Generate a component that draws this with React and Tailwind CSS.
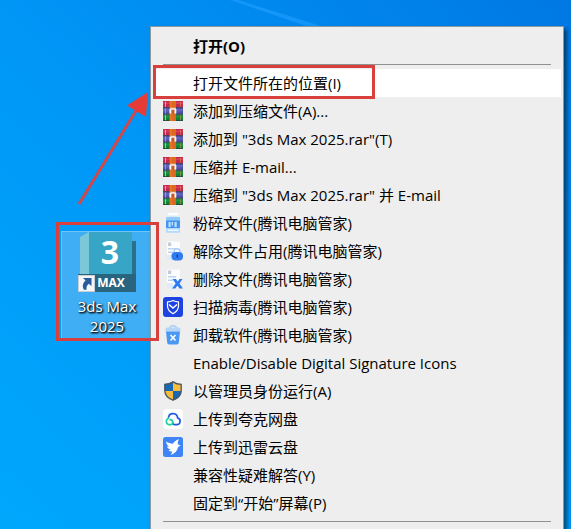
function RarIcon() {
  return (
    <svg viewBox="0 0 20 20" className="size-5" aria-hidden="true">
      <rect x="0" y="0" width="20" height="6.5" fill="#c0284c" />
      <rect x="0" y="1.2" width="20" height="2" fill="#d93a60" />
      <rect x="0" y="6.500" width="20" height="7" fill="#4c50a4" />
      <rect x="0" y="8" width="20" height="2.500" fill="#5e62b8" />
      <rect x="0" y="13.500" width="20" height="6.500" fill="#128038" />
      <rect x="0" y="14.600" width="20" height="2" fill="#1f9346" />
      <path d="M0 6.500h20M0 13.300h20M0 19.700h20" stroke="#2b2038" strokeWidth="0.600" />
      <path d="M2.500 0.800v5M2.500 14.200v5" stroke="#e8b83a" strokeWidth="1" />
      <path d="M17.500 0.800v5M17.500 14.200v5" stroke="#e0a040" strokeWidth="0.500" />
      <path d="M2.500 7.200v5.500" stroke="#b9a0a8" strokeWidth="0.800" />
      <rect x="6.500" y="0" width="6.500" height="20" fill="#dc6a1e" />
      <path d="M8 0v20" stroke="#ee8a34" strokeWidth="0.800" />
      <path d="M6.500 12.500V8h2v4.500zM11.300 12.500V8h2v4.500z" fill="#fff" />
      <path d="M7.200 6.800h5.600v2H7.200z" fill="#f3dcd0" />
      <path d="M8.500 9h2.800v3.500H8.500z" fill="#c05a30" />
    </svg>
  );
}

function ShredIcon() {
  return (
    <svg viewBox="0 0 20 20" className="size-5" aria-hidden="true">
      <rect x="5" y="0" width="10" height="5" rx="0.800" fill="#fbfdff" />
      <path d="M5.500 2.500h9v1.500h-9z" fill="#d5e6f8" />
      <rect x="3" y="4" width="14" height="4" rx="1" fill="#8ecbfb" />
      <path d="M3 7.500h14V15H3z" fill="#4394f3" />
      <path d="M5.500 9h2.200v5H5.500zM8.600 9h1.400v3.500H8.600zM11.500 9h2.200v5h-2.200z" fill="#bfe0ff" />
      <path d="M3 15h14v3.500a1.200 1.200 0 0 1-1.200 1.200H4.200A1.200 1.200 0 0 1 3 18.500z" fill="#b3d9fb" />
      <path d="M4.500 16.500h11V18h-11z" fill="#f0f8ff" />
    </svg>
  );
}

function SheetBase() {
  return (
    <>
      <path d="M4 0.500h13V19H4z" fill="#fbfcfe" />
      <path d="M5 1.500h3.200V5H5z" fill="#c3cbd6" />
      <path d="M5 7h8v1.600H5zM5 10.500h5v1.400H5z" fill="#bcd4ee" />
      <path d="M4 14h6v5H4z" fill="#dfecfb" />
    </>
  );
}

function UnlockFileIcon() {
  return (
    <svg viewBox="0 0 20 20" className="size-5" aria-hidden="true">
      <SheetBase />
      <path d="M11 11.500v-.8a3 3 0 0 1 6 0v.8" fill="none" stroke="#a9cdf8" strokeWidth="1.500" />
      <rect x="8.500" y="11" width="11.500" height="8.500" rx="4" fill="#2f7cf0" />
      <path d="M14.300 13.500v3.200" stroke="#1440a8" strokeWidth="1.500" />
    </svg>
  );
}

function DeleteFileIcon() {
  return (
    <svg viewBox="0 0 20 20" className="size-5" aria-hidden="true">
      <SheetBase />
      <path d="M9.500 10h3.500l1.700 2.500L16.500 10h3l-3 4.400 3.500 5.100h-3.600l-1.900-2.800-2.200 2.800H9l3.600-4.900z" fill="#2f7cf0" />
    </svg>
  );
}

function ScanIcon() {
  return (
    <svg viewBox="0 0 20 20" className="size-5" aria-hidden="true">
      <rect width="20" height="20" rx="3" fill="#1d43e0" />
      <path d="M10 3.600c1.800 1 3.600 1.300 5.500 1.300v4.200c0 3.400-2.200 5.800-5.500 7.600-3.300-1.800-5.500-4.200-5.500-7.600V4.900c1.900 0 3.700-.3 5.500-1.300z" fill="none" stroke="#fff" strokeWidth="1.200" strokeLinejoin="round" />
      <path d="M6 7.500l4 3.500 4-3.500" fill="none" stroke="#fff" strokeWidth="1.500" />
    </svg>
  );
}

function UninstallIcon() {
  return (
    <svg viewBox="0 0 20 20" className="size-5" aria-hidden="true">
      <path d="M6.500 3C7 1 8.500 0.700 10 0.700S13 1 13.500 3" fill="none" stroke="#a9cdf5" strokeWidth="1.400" />
      <path d="M2.500 4a2 2 0 0 1 2-1.500h11a2 2 0 0 1 2 1.500v2.500h-15z" fill="#b5d6f8" />
      <path d="M3 6.500h14l-1.200 11.300a2 2 0 0 1-2 1.800H6.200a2 2 0 0 1-2-1.800z" fill="#4a98f5" />
      <path d="M7.500 10l5 5.500M12.500 10l-5 5.500" stroke="#fff" strokeWidth="1.600" />
    </svg>
  );
}

function ShieldIcon() {
  return (
    <svg viewBox="0 0 20 20" className="size-5" aria-hidden="true">
      <clipPath id="shield-shape">
        <path d="M10 0.500C12.500 2.300 15.500 3 18.500 3v6.500c0 5-4 8.300-8.500 10-4.500-1.700-8.500-5-8.500-10V3c3 0 6-.7 8.500-2.500z" />
      </clipPath>
      <g clipPath="url(#shield-shape)">
        <path d="M0 0h10v10H0zM10 10h10v10H10z" fill="#1868b8" />
        <path d="M10 0h10v10H10zM0 10h10v10H0z" fill="#f8bc3c" />
      </g>
      <path d="M10 0.900C12.500 2.600 15.300 3.300 18.200 3.300v6.200c0 4.800-3.800 8-8.200 9.600-4.400-1.600-8.200-4.800-8.200-9.600V3.300c2.900 0 5.700-.7 8.200-2.400z" fill="none" stroke="#4a5560" strokeWidth="1.300" />
    </svg>
  );
}

function QuarkIcon() {
  return (
    <svg viewBox="0 0 20 20" className="size-5" aria-hidden="true">
      <rect width="20" height="20" rx="4" fill="#fff" />
      <path d="M5.500 8.300a4.600 4.600 0 0 1 9.100.6 3.500 3.500 0 0 1-.4 6.800h-2.600c-1.200 0-1.900-.7-1.900-1.900" fill="none" stroke="#2358e8" strokeWidth="1.700" strokeLinecap="round" />
      <path d="M5.300 9.200a3.500 3.500 0 0 0 .4 6.500h2c1.300 0 2.100-.8 2.100-2.100 0-1.700-1.100-2.800-2.700-2.900" fill="none" stroke="#1fd0a0" strokeWidth="1.700" strokeLinecap="round" />
    </svg>
  );
}

function XunleiIcon() {
  return (
    <svg viewBox="0 0 20 20" className="size-5" aria-hidden="true">
      <rect width="20" height="20" rx="2.500" fill="#3f84f7" />
      <path d="M3 4.500c2.400 1.400 4.700 2 6.800 2.300C10.800 5 12.800 3 16 2.200c-1 1.700-1.400 3.300-1.100 5 .9.300 2 .9 3 1.800-1.200 0-2.300.4-2.900 1.300-.6 3.800-3.200 6.300-7.600 7.600 1-1.200 1.700-2.400 1.900-3.500-1.500.2-2.900-.1-4-.8.9-.2 1.600-.6 2.100-1.100-1.900-.7-3-1.700-3.500-3 .7.200 1.300.3 1.900.2C4.400 8.400 3.400 6.600 3 4.500z" fill="#fff" />
    </svg>
  );
}

function MaxIcon() {
  return (
    <svg viewBox="0 0 58 60" className="h-[60px] w-[58px] overflow-visible" aria-hidden="true">
      <path d="M10 9h48v51H10z" fill="#2b6f8b" />
      <path d="M2 5l9-5v42H2z" fill="#7cc8d8" />
      <path d="M11 0h43v42H11z" fill="#37a5c6" />
      <path d="M0 42h58v18H0z" fill="#2a6580" />
      <text x="32" y="32" textAnchor="middle" fontSize="32" fill="#fff" className="font-['Open_Sans',sans-serif] font-bold">3</text>
      <text x="33" y="55" textAnchor="middle" fontSize="12" fill="#fff" className="font-['Open_Sans',sans-serif] font-bold">MAX</text>
      <rect x="0.500" y="43.500" width="16" height="16" fill="#f4f6f8" stroke="#c8d0d6" />
      <path d="M5 46h8.500v8l-2.700-2.300c-2 1.500-2.500 3.300-2.300 6H6c-2-3.500-1.200-7 1.600-9.300z" fill="#2a5a9e" />
    </svg>
  );
}

const ITEMS = [
  { label: "打开(O)", bold: true, divider: true },
  { label: "打开文件所在的位置(I)", active: true },
  { label: "添加到压缩文件(A)...", icon: RarIcon },
  { label: '添加到 "3ds Max 2025.rar"(T)', icon: RarIcon },
  { label: "压缩并 E-mail...", icon: RarIcon },
  { label: '压缩到 "3ds Max 2025.rar" 并 E-mail', icon: RarIcon },
  { label: "粉碎文件(腾讯电脑管家)", icon: ShredIcon },
  { label: "解除文件占用(腾讯电脑管家)", icon: UnlockFileIcon },
  { label: "删除文件(腾讯电脑管家)", icon: DeleteFileIcon },
  { label: "扫描病毒(腾讯电脑管家)", icon: ScanIcon },
  { label: "卸载软件(腾讯电脑管家)", icon: UninstallIcon },
  { label: "Enable/Disable Digital Signature Icons" },
  { label: "以管理员身份运行(A)", icon: ShieldIcon },
  { label: "上传到夸克网盘", icon: QuarkIcon },
  { label: "上传到迅雷云盘", icon: XunleiIcon },
  { label: "兼容性疑难解答(Y)" },
  { label: "固定到“开始”屏幕(P)", divider: true },
];

function MenuItem({ label, icon: Icon, bold, active }) {
  return (
    <button
      type="button"
      role="menuitem"
      className={`flex h-7 w-full items-center gap-2.5 pl-2.5 text-left whitespace-nowrap ${bold ? "font-bold" : ""} ${active ? "bg-white" : "hover:bg-white"}`}
    >
      <span className="size-5 shrink-0">{Icon && <Icon />}</span>
      <span>{label}</span>
    </button>
  );
}

export default function App() {
  return (
    <main className="relative h-screen overflow-hidden bg-linear-to-tr from-[#00a8fc] via-[#0096f6] to-[#0078e4] font-['Open_Sans','Noto_Sans_CJK_SC',sans-serif] text-[15px] leading-5">
      <svg viewBox="0 0 120 32" className="ml-[230px] h-8 w-[120px]" aria-hidden="true">
        <path d="M0 0h8l96 30H88z" fill="#1fa0ff" opacity="0.600" />
      </svg>

      <button
        type="button"
        className="absolute top-[231px] left-[61px] flex w-[92px] flex-col items-center border border-[#70c4f8] bg-[#40aef4] pb-0.5 text-white"
      >
        <MaxIcon />
        <span className="mt-1 w-16 text-center [text-shadow:1px_1px_2px_#000,1px_1px_2px_#000]">3ds Max 2025</span>
      </button>

      <div
        role="menu"
        className="absolute top-[26px] right-[7px] left-[150px] flex flex-col border border-[#8a9aa3] bg-[#eeeeee] px-0.5 pt-[5px] pb-7 text-black shadow-[3px_3px_4px_rgba(0,0,0,0.5)]"
      >
        {ITEMS.map((item) => (
          <div key={item.label}>
            <MenuItem {...item} />
            {item.divider && <hr className="mx-2.5 my-1 border-t border-[#919191]" />}
          </div>
        ))}
      </div>

      <div className="absolute top-[65px] left-[153px] h-[34px] w-[222px] border-3 border-[#d8403e]" />
      <div className="absolute top-[222px] left-[56px] h-[119px] w-[103px] border-3 border-[#d8403e]" />
      <svg viewBox="0 0 72 114" className="absolute top-[91px] left-[77px] h-[114px] w-[72px]" aria-hidden="true">
        <path d="M2 113L60 18" stroke="#d0484c" strokeWidth="3" />
        <path d="M71 1L50 14.500 69 26z" fill="#e63c38" />
      </svg>
    </main>
  );
}
